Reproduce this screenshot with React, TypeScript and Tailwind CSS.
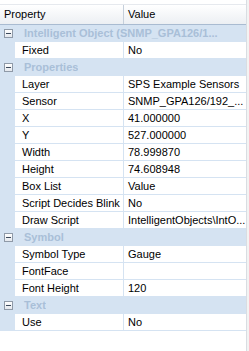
import React from "react";

type Row =
  | { kind: "cat"; label: string }
  | { kind: "prop"; name: string; value: string };

const rows: Row[] = [
  { kind: "cat", label: "Intelligent Object (SNMP_GPA126/1..." },
  { kind: "prop", name: "Fixed", value: "No" },
  { kind: "cat", label: "Properties" },
  { kind: "prop", name: "Layer", value: "SPS Example Sensors" },
  { kind: "prop", name: "Sensor", value: "SNMP_GPA126/192_..." },
  { kind: "prop", name: "X", value: "41.000000" },
  { kind: "prop", name: "Y", value: "527.000000" },
  { kind: "prop", name: "Width", value: "78.999870" },
  { kind: "prop", name: "Height", value: "74.608948" },
  { kind: "prop", name: "Box List", value: "Value" },
  { kind: "prop", name: "Script Decides Blink", value: "No" },
  { kind: "prop", name: "Draw Script", value: "IntelligentObjects\\IntO..." },
  { kind: "cat", label: "Symbol" },
  { kind: "prop", name: "Symbol Type", value: "Gauge" },
  { kind: "prop", name: "FontFace", value: "" },
  { kind: "prop", name: "Font Height", value: "120" },
  { kind: "cat", label: "Text" },
  { kind: "prop", name: "Use", value: "No" },
];

function Minus() {
  return (
    <div className="w-[9px] h-[9px] border border-[#8f9aa8] bg-gradient-to-b from-white to-[#e4e8ee] flex items-center justify-center">
      <div className="w-[5px] h-px bg-[#3c4a5c]" />
    </div>
  );
}

export default function App() {
  return (
    <div
      className="w-[249px] h-[351px] bg-white flex overflow-hidden text-[11px] text-black"
      style={{ fontFamily: '"Liberation Sans", Arial, sans-serif' }}
    >
      <div className="w-[246px] flex flex-col pt-[4px]">
        {/* header */}
        <div className="h-[21px] flex border-t border-[#e6e9ee] border-b border-b-[#a9bbd1] bg-gradient-to-b from-white to-[#eceff3]">
          <div className="w-[124px] border-r border-[#c5cfdb] pl-[4px] flex items-center">Property</div>
          <div className="flex-1 pl-[4px] flex items-center">Value</div>
        </div>
        {rows.map((r, i) =>
          r.kind === "cat" ? (
            <div key={i} className="h-[17px] bg-[#d5e3f2] flex items-center border-b border-[#d5e3f2]">
              <div className="w-[15px] flex justify-center pl-[1px]">
                <Minus />
              </div>
              <div className="pl-[9px] font-bold text-[#a9bfd8] whitespace-nowrap overflow-hidden">{r.label}</div>
            </div>
          ) : (
            <div key={i} className="h-[17px] flex bg-[#d5e3f2]">
              <div className="w-[15px]" />
              <div className="w-[109px] bg-white border-b border-r border-[#d5e3f2] pl-[7px] flex items-center whitespace-nowrap overflow-hidden">
                {r.name}
              </div>
              <div className="flex-1 bg-white border-b border-[#d5e3f2] pl-[4px] flex items-center whitespace-nowrap overflow-hidden">
                {r.value}
              </div>
            </div>
          )
        )}
      </div>
      <div className="w-[3px] border-l border-[#d9dde2] bg-[#f3f3f3]" />
    </div>
  );
}
